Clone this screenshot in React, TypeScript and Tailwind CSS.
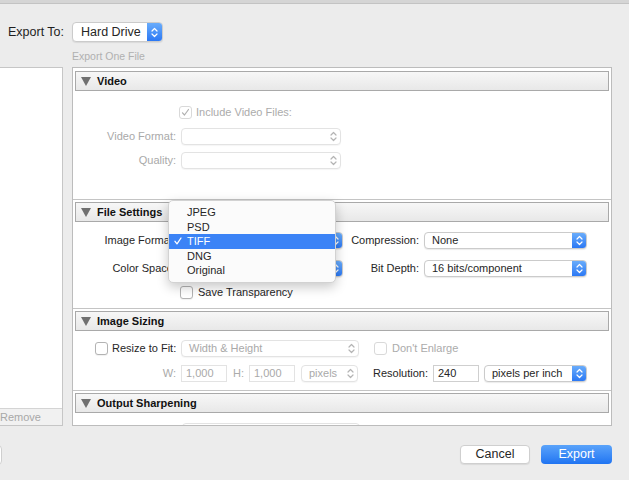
import React from 'react';

type SelectProps = {
  value?: string;
  width: string;
  variant?: 'blue' | 'disabled';
  tall?: boolean;
};

const Stepper = ({ color }: { color: string }) => (
  <svg width="7" height="11" viewBox="0 0 7 11" fill="none">
    <path d="M1 4 L3.5 1.5 L6 4" stroke={color} strokeWidth="1.2" strokeLinecap="round" strokeLinejoin="round" />
    <path d="M1 7 L3.5 9.5 L6 7" stroke={color} strokeWidth="1.2" strokeLinecap="round" strokeLinejoin="round" />
  </svg>
);

const Select: React.FC<SelectProps> = ({ value = '', width, variant = 'blue', tall = false }) => {
  const h = tall ? 'h-[20px] text-[12.5px]' : 'h-[17px] text-[11px]';
  if (variant === 'disabled') {
    return (
      <div className={`${width} ${h} flex items-center rounded-[4px] bg-white border border-[#e3e3e3] shadow-[0_1px_1px_rgba(0,0,0,0.04)]`}>
        <span className="flex-1 pl-[7px] text-[#a9a9a9] whitespace-nowrap overflow-hidden">{value}</span>
        <span className="w-[14px] flex items-center justify-center">
          <Stepper color="#b4b4b4" />
        </span>
      </div>
    );
  }
  return (
    <div className={`${width} ${h} flex items-center rounded-[4px] bg-white border border-[#cbcbcb] shadow-[0_1px_1px_rgba(0,0,0,0.08)] overflow-hidden`}>
      <span className={`flex-1 ${tall ? 'pl-[8px]' : 'pl-[7px]'} text-[#262626] whitespace-nowrap overflow-hidden`}>{value}</span>
      <span className={`${tall ? 'w-[15px]' : 'w-[14px]'} self-stretch flex items-center justify-center bg-gradient-to-b from-[#69acfb] to-[#2b78f4]`}>
        <Stepper color="#ffffff" />
      </span>
    </div>
  );
};

const Checkbox = ({ checked = false, disabled = false }: { checked?: boolean; disabled?: boolean }) => (
  <span
    className={`w-[13px] h-[13px] shrink-0 rounded-[3px] bg-white border flex items-center justify-center ${
      disabled ? 'border-[#d9d9d9]' : 'border-[#b3b3b3] shadow-[0_1px_1px_rgba(0,0,0,0.06)]'
    }`}
  >
    {checked && (
      <svg width="9" height="9" viewBox="0 0 9 9" fill="none">
        <path d="M1.5 4.8 L3.5 7 L7.5 1.5" stroke={disabled ? '#b0b0b0' : '#333'} strokeWidth="1.2" strokeLinecap="round" strokeLinejoin="round" />
      </svg>
    )}
  </span>
);

const Input = ({ value, width, disabled = false }: { value: string; width: string; disabled?: boolean }) => (
  <div
    className={`${width} h-[17px] flex items-center pl-[4px] bg-white border ${
      disabled ? 'border-[#e3e3e3] text-[#a9a9a9]' : 'border-[#cfcfcf] text-[#262626]'
    }`}
  >
    {value}
  </div>
);

const SectionHeader = ({ title, first = false }: { title: string; first?: boolean }) => (
  <>
    {!first && <div className="-mx-[2px] h-px bg-[#c4c4c4]" />}
    <div
      className={`${first ? '' : 'mt-[2px]'} h-[20px] flex items-center border border-[#a9a9a9] bg-gradient-to-b from-[#f7f7f7] to-[#e8e8e8]`}
    >
      <svg width="10" height="9" viewBox="0 0 10 9" className="ml-[5px]">
        <path d="M0 0 H10 L5 9 Z" fill="#707070" />
      </svg>
      <span className="ml-[6px] font-bold text-[11px] text-[#111]">{title}</span>
    </div>
  </>
);

const Label = ({ children, width = 'w-[101px]', muted = false }: { children: React.ReactNode; width?: string; muted?: boolean }) => (
  <div className={`${width} shrink-0 text-right whitespace-nowrap ${muted ? 'text-[#a9a9a9]' : 'text-[#262626]'}`}>{children}</div>
);

// label cut off where the open popup menu starts (x 168)
const ClippedLabel = ({ children }: { children: React.ReactNode }) => (
  <div className="w-[101px] shrink-0">
    <div className="w-[93px] overflow-hidden">
      <div className="w-[101px] text-right whitespace-nowrap">{children}</div>
    </div>
  </div>
);

const formats = ['JPEG', 'PSD', 'TIFF', 'DNG', 'Original'];

export default function App() {
  return (
    <div className="relative w-[629px] h-[480px] overflow-hidden bg-[#ececec] font-['Liberation_Sans',Arial,sans-serif] text-[11px] text-[#262626]">
      <div className="h-[4px] bg-[#d5d5d5] border-b border-[#c3c3c3]" />

      <div className="mt-[18px] h-[20px] flex items-center pl-[8px]">
        <span className="w-[64px] text-[12.5px] text-[#1e1e1e]">Export To:</span>
        <Select value="Hard Drive" width="w-[91px]" tall />
      </div>

      <div className="mt-[8px] h-[12px] pl-[72px] text-[10.5px] leading-[12px] text-[#b0b0b0]">Export One File</div>

      <div className="mt-[5px] flex h-[359px]">
        <div className="w-[63px] flex flex-col bg-white border-y border-r border-[#c6c6c6]">
          <div className="flex-1" />
          <div className="h-[17px] flex items-center border-t border-[#d4d4d4] bg-[#f1f1f1] text-[11px] text-[#a8a8a8]">
            Remove
          </div>
        </div>

        <div className="ml-[9px] w-[540px] bg-white border border-[#bcbcbc] px-[2px] pt-[3px] overflow-hidden">
          <SectionHeader title="Video" first />
          <div className="h-[108px] pt-[13px]">
            <div className="h-[17px] flex items-center">
              <div className="w-[104px]" />
              <Checkbox checked disabled />
              <span className="ml-[4px] text-[#ababab]">Include Video Files:</span>
            </div>
            <div className="mt-[7px] h-[17px] flex items-center">
              <Label muted>Video Format:</Label>
              <div className="ml-[5px]">
                <Select width="w-[160px]" variant="disabled" />
              </div>
            </div>
            <div className="mt-[7px] h-[17px] flex items-center">
              <Label muted>Quality:</Label>
              <div className="ml-[5px]">
                <Select width="w-[160px]" variant="disabled" />
              </div>
            </div>
          </div>

          <SectionHeader title="File Settings" />
          <div className="h-[86px] pt-[10px]">
            <div className="h-[17px] flex items-center">
              <ClippedLabel>Image Format:</ClippedLabel>
              <div className="ml-[5px]">
                <Select width="w-[162px]" />
              </div>
              <Label width="w-[76px]">Compression:</Label>
              <div className="ml-[5px]">
                <Select value="None" width="w-[163px]" />
              </div>
            </div>
            <div className="mt-[11px] h-[17px] flex items-center">
              <ClippedLabel>Color Space:</ClippedLabel>
              <div className="ml-[5px]">
                <Select width="w-[162px]" />
              </div>
              <Label width="w-[76px]">Bit Depth:</Label>
              <div className="ml-[5px]">
                <Select value="16 bits/component" width="w-[163px]" />
              </div>
            </div>
            <div className="mt-[7px] h-[17px] flex items-center">
              <div className="w-[105px]" />
              <Checkbox />
              <span className="ml-[5px]">Save Transparency</span>
            </div>
          </div>

          <SectionHeader title="Image Sizing" />
          <div className="h-[59px] pt-[9px]">
            <div className="h-[17px] flex items-center">
              <div className="w-[101px] shrink-0 flex items-center pl-[20px]">
                <Checkbox />
                <span className="ml-[4px] whitespace-nowrap">Resize to Fit:</span>
              </div>
              <div className="ml-[5px]">
                <Select value="Width & Height" width="w-[178px]" variant="disabled" />
              </div>
              <div className="ml-[15px] flex items-center">
                <Checkbox disabled />
                <span className="ml-[5px] text-[#ababab]">Don't Enlarge</span>
              </div>
            </div>
            <div className="mt-[8px] h-[17px] flex items-center">
              <Label muted>W:</Label>
              <div className="ml-[5px]">
                <Input value="1,000" width="w-[46px]" disabled />
              </div>
              <span className="ml-[6px] text-[#ababab]">H:</span>
              <div className="ml-[5px]">
                <Input value="1,000" width="w-[46px]" disabled />
              </div>
              <div className="ml-[6px]">
                <Select value="pixels" width="w-[57px]" variant="disabled" />
              </div>
              <Label width="w-[70px]">Resolution:</Label>
              <div className="ml-[5px]">
                <Input value="240" width="w-[46px]" />
              </div>
              <div className="ml-[5px]">
                <Select value="pixels per inch" width="w-[103px]" />
              </div>
            </div>
          </div>

          <SectionHeader title="Output Sharpening" />
          <div className="pt-[10px]">
            <div className="h-[17px] flex items-center">
              <div className="w-[20px]" />
              <Checkbox />
              <div className="ml-[74px]">
                <Select width="w-[178px]" variant="disabled" />
              </div>
            </div>
          </div>
        </div>
      </div>

      <div className="mt-[19px] flex items-center h-[19px]">
        <div className="w-[40px] -ml-[38px] h-[20px] bg-white border border-[#cfcfcf] rounded-[4px]" />
        <div className="ml-auto w-[70px] h-[19px] flex items-center justify-center bg-white border border-[#cfcfcf] rounded-[4px] shadow-[0_1px_1px_rgba(0,0,0,0.08)] text-[12.5px] text-[#262626]">
          Cancel
        </div>
        <div className="ml-[11px] mr-[17px] w-[71px] h-[19px] flex items-center justify-center rounded-[4px] bg-gradient-to-b from-[#5aa3fa] to-[#1f74f2] text-[12.5px] text-white">
          Export
        </div>
      </div>

      <div className="absolute left-[168px] top-[200px] w-[168px] py-[4px] rounded-[5px] bg-[#fbfbfb] border border-[#d2d2d2] shadow-[0_4px_12px_rgba(0,0,0,0.22)]">
        {formats.map((f) => {
          const active = f === 'TIFF';
          return (
            <div
              key={f}
              className={`h-[14.5px] flex items-center text-[11px] ${
                active ? 'bg-[#3b83f6] text-white' : 'text-[#262626]'
              }`}
            >
              <span className="w-[18px] shrink-0 flex items-center justify-center">
                {active && (
                  <svg width="8" height="8" viewBox="0 0 8 8" fill="none">
                    <path d="M1 4.3 L3 6.8 L7 1" stroke="#fff" strokeWidth="1.3" strokeLinecap="round" strokeLinejoin="round" />
                  </svg>
                )}
              </span>
              {f}
            </div>
          );
        })}
      </div>
    </div>
  );
}
